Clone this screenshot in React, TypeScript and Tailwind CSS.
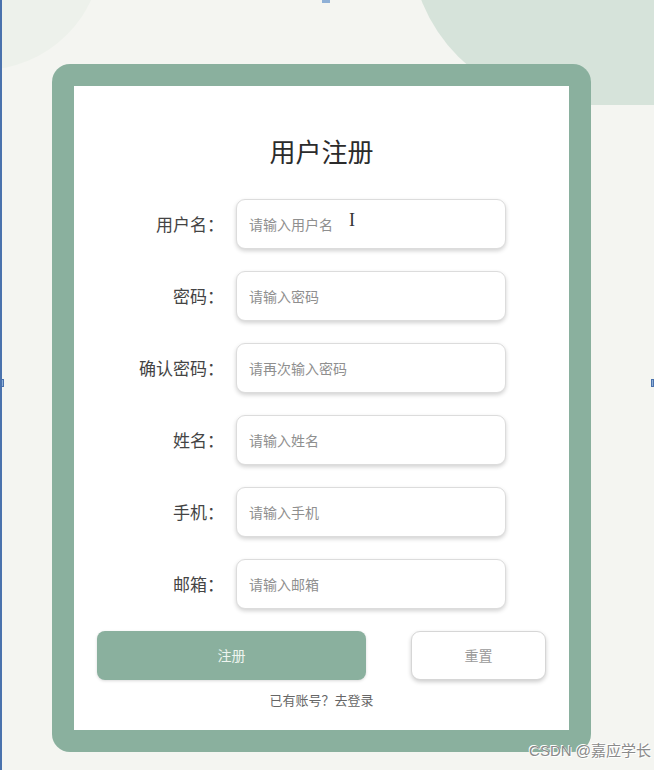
import React from "react";

const fields = [
  { label: "用户名", placeholder: "请输入用户名" },
  { label: "密码", placeholder: "请输入密码" },
  { label: "确认密码", placeholder: "请再次输入密码" },
  { label: "姓名", placeholder: "请输入姓名" },
  { label: "手机", placeholder: "请输入手机" },
  { label: "邮箱", placeholder: "请输入邮箱" },
];

const font = { fontFamily: '"Noto Sans CJK SC", "Noto Sans", sans-serif' };

export default function App() {
  return (
    <div
      className="relative h-[770px] w-[654px] overflow-hidden bg-[#f4f5f1] border-l-2 border-[#4a72ad]"
      style={font}
    >
      {/* background decorations */}
      <div className="absolute left-[-220px] top-[-170px] h-[240px] w-[320px] rounded-full bg-[#edf1eb]" />
      <div className="absolute left-[408px] top-[-225px] h-[330px] w-[540px] rounded-full bg-[#d6e3da]" />
      {/* selection handles */}
      <div className="absolute left-[-2px] top-[379px] h-[8px] w-[4px] bg-[#8fb0d6] border border-[#4a72ad]" />
      <div className="absolute right-0 top-[379px] h-[8px] w-[3px] bg-[#8fb0d6] border border-[#4a72ad]" />
      <div className="absolute left-[320px] top-0 h-[3px] w-[8px] bg-[#8fb0d6]" />

      <div className="relative pt-[64px] pl-[50px]">
        <div className="w-[539px] h-[688px] rounded-[18px] bg-[#8ab09e] p-[22px]">
          <div className="h-full w-full bg-white flex flex-col">
            <h1 className="mt-[48px] text-center text-[26px] leading-[34px] text-[#2b2b2b]">用户注册</h1>

            <div className="mt-[31px] flex flex-col gap-[22px]">
              {fields.map((f, i) => (
                <div key={f.label} className="flex items-center">
                  <label className="w-[150px] text-right text-[17px] text-[#444]">
                    {f.label}：
                  </label>
                  <div className="relative ml-[12px] w-[270px] h-[50px]">
                    <input
                      className="h-full w-full rounded-[9px] border border-[#dcdcdc] bg-white px-[12px] text-[14px] text-[#333] shadow-[0_2px_4px_rgba(0,0,0,0.18)] outline-none placeholder:text-[#8f8f8f]"
                      placeholder={f.placeholder}
                      style={font}
                    />
                    {i === 0 && (
                      <span
                        className="absolute left-[113px] top-[8px] text-[18px] text-[#333]"
                        style={{ fontFamily: '"Liberation Serif", serif' }}
                      >
                        I
                      </span>
                    )}
                  </div>
                </div>
              ))}
            </div>

            <div className="mt-[22px] flex items-center pl-[23px]">
              <button className="h-[49px] w-[269px] rounded-[8px] bg-[#8ab09e] text-[14px] text-[#eef5f0] shadow-[0_1px_3px_rgba(0,0,0,0.15)]">
                注册
              </button>
              <button className="ml-[45px] h-[49px] w-[135px] rounded-[9px] border border-[#d6d6d6] bg-white text-[14px] text-[#9a9a9a] shadow-[0_2px_4px_rgba(0,0,0,0.2)]">
                重置
              </button>
            </div>

            <p className="mt-[10px] text-center text-[13px] text-[#666]">已有账号？去登录</p>
          </div>
        </div>
      </div>

      <div
        className="absolute right-[3px] bottom-[8px] text-[15px] text-[#8a8a8a]"
        style={{
          textShadow: "1px 1px 0 #fff, -1px -1px 0 #fff",
          fontFamily: '"Liberation Sans", "Noto Sans CJK SC", sans-serif',
        }}
      >
        CSDN @嘉应学长
      </div>
    </div>
  );
}
